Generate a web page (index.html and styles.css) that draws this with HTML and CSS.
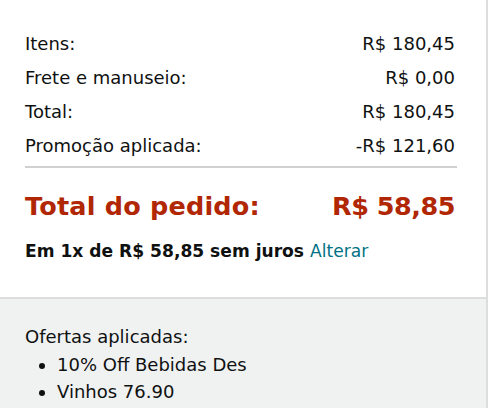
FILE: index.html
```html
<!DOCTYPE html>
<html lang="pt-BR">
<head>
<meta charset="utf-8">
<link rel="stylesheet" href="styles.css">
</head>
<body>
<div class="box">
  <div class="summary">
    <div class="row"><span>Itens:</span><span>R$ 180,45</span></div>
    <div class="row"><span>Frete e manuseio:</span><span>R$ 0,00</span></div>
    <div class="row"><span>Total:</span><span>R$ 180,45</span></div>
    <div class="row"><span>Promoção aplicada:</span><span>-R$ 121,60</span></div>
    <div class="divider"></div>
    <div class="grand"><span class="grand-label">Total do pedido:</span><span class="grand-price">R$ 58,85</span></div>
    <div class="installments">Em 1x de R$ 58,85 sem juros <a class="link" href="#">Alterar</a></div>
  </div>
  <div class="offers">
    <div class="offers-title">Ofertas aplicadas:</div>
    <ul class="offers-list">
      <li>10% Off Bebidas Des</li>
      <li>Vinhos 76.90</li>
    </ul>
  </div>
</div>
</body>
</html>
```

FILE: styles.css
```css
html, body {
  margin: 0;
  padding: 0;
  background: #fff;
}
body {
  font-family: "DejaVu Sans", "Open Sans", sans-serif;
  color: #0f1111;
  width: 500px;
  height: 408px;
  overflow: hidden;
}
.box {
  width: 486px;
  height: 408px;
  border-right: 2px solid #dddddd;
  display: flex;
  flex-direction: column;
}
.summary {
  padding: 27px 31px 0 25px;
  height: 297px;
  flex: none;
  box-sizing: border-box;
}
.row {
  display: flex;
  justify-content: space-between;
  font-size: 18px;
  line-height: 34px;
}
.divider {
  border-top: 2px solid #d0d0d0;
  margin: 3px -2px 0 0;
}
.grand {
  display: flex;
  justify-content: space-between;
  color: #b12704;
  font-weight: 700;
  font-size: 25.5px;
  line-height: 40px;
  margin-top: 18px;
}
.grand-label {
  letter-spacing: 0.2px;
}
.grand-price {
  letter-spacing: -0.5px;
}
.installments {
  font-weight: 700;
  font-size: 17.1px;
  line-height: 26px;
  margin-top: 12px;
}
.link {
  color: #007185;
  font-weight: 400;
  text-decoration: none;
}
.offers {
  flex: 1;
  background: #f0f2f2;
  border-top: 2px solid #dddddd;
  padding: 24px 25px 0 25px;
  font-size: 18px;
  line-height: 27.5px;
}
.offers-list {
  margin: 0;
  padding-left: 32px;
}
```
